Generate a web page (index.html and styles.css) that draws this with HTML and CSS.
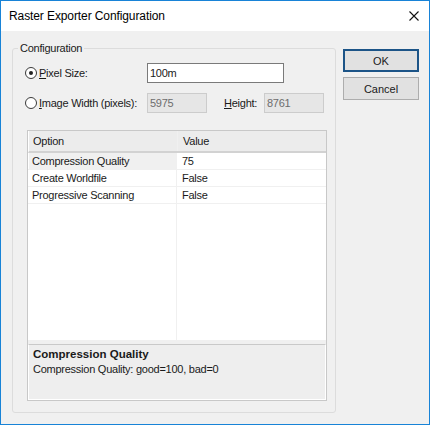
FILE: index.html
```html
<!DOCTYPE html>
<html lang="en">
<head>
  <meta charset="UTF-8">
  <title>Raster Exporter Configuration</title>
  <link rel="stylesheet" href="styles.css">
</head>
<body>
  <div class="window">
    <div class="titlebar">
      <span class="title">Raster Exporter Configuration</span>
      <svg class="close" width="10" height="10" viewBox="0 0 10 10">
        <path d="M0.5 0.5 L9.5 9.5 M9.5 0.5 L0.5 9.5" stroke="#111" stroke-width="1.1" fill="none"/>
      </svg>
    </div>

    <div class="client">
      <fieldset class="group">
        <legend>Configuration</legend>

        <div class="field-row first">
          <span class="radio checked"></span>
          <span class="label"><u>P</u>ixel Size:</span>
          <div class="textbox wide">100m</div>
        </div>

        <div class="field-row">
          <span class="radio"></span>
          <span class="label"><u>I</u>mage Width (pixels):</span>
          <div class="textbox disabled">5975</div>
          <span class="label short"><u>H</u>eight:</span>
          <div class="textbox disabled">8761</div>
        </div>

        <div class="grid">
          <div class="grid-head">
            <div class="cell name">Option</div>
            <div class="cell value">Value</div>
          </div>
          <div class="grid-row selected">
            <div class="cell name">Compression Quality</div>
            <div class="cell value">75</div>
          </div>
          <div class="grid-row">
            <div class="cell name">Create Worldfile</div>
            <div class="cell value">False</div>
          </div>
          <div class="grid-row">
            <div class="cell name">Progressive Scanning</div>
            <div class="cell value">False</div>
          </div>
          <div class="grid-empty">
            <div class="cell name"></div>
            <div class="cell value"></div>
          </div>
          <div class="grid-footer">
            <div class="grid-desc">
              <div class="desc-title">Compression Quality</div>
              <div class="desc-text">Compression Quality: good=100, bad=0</div>
            </div>
          </div>
        </div>
      </fieldset>

      <div class="buttons">
        <button class="btn default">OK</button>
        <button class="btn">Cancel</button>
      </div>
    </div>
  </div>
</body>
</html>
```

FILE: styles.css
```css
* {
  box-sizing: border-box;
  margin: 0;
  padding: 0;
}

body {
  font-family: 'Liberation Sans', Arial, sans-serif;
  font-size: 11px;
  letter-spacing: -0.25px;
  color: #1a1a1a;
  background: #f0f0f0;
}

.window {
  width: 430px;
  height: 425px;
  border: 1px solid #1883d7;
  background: #f0f0f0;
  display: flex;
  flex-direction: column;
}

.titlebar {
  height: 30px;
  background: #fff;
  display: flex;
  align-items: center;
  justify-content: space-between;
  padding: 0 10px 0 8px;
}

.title {
  font-size: 12px;
  letter-spacing: -0.1px;
  color: #000;
}

.client {
  flex: 1;
  display: flex;
  gap: 7px;
  padding: 11px 10px 11px 11px;
}

.group {
  width: 324px;
  border: 1px solid #dcdcdc;
  border-radius: 3px;
  padding: 8px 7px 0 12px;
}

.group legend {
  line-height: 13px;
  padding: 0 2px;
  margin-left: -7px;
  color: #1a1a1a;
}

.field-row {
  display: flex;
  align-items: center;
  height: 20px;
}

.field-row.first {
  margin-bottom: 10px;
}

.radio {
  width: 12px;
  height: 12px;
  border: 1px solid #3a3a3a;
  border-radius: 50%;
  background: #fff;
  margin-right: 2px;
  display: flex;
  align-items: center;
  justify-content: center;
}

.radio.checked::after {
  content: '';
  width: 4px;
  height: 4px;
  border-radius: 50%;
  background: #222;
}

.label {
  width: 108px;
  white-space: nowrap;
}

.label.short {
  width: 40px;
  margin-left: 17px;
}

.textbox {
  width: 60px;
  height: 20px;
  line-height: 18px;
  padding-left: 2px;
  border: 1px solid #7a7a7a;
  background: #fff;
}

.textbox.wide {
  width: 137px;
}

.textbox.disabled {
  border-color: #cccccc;
  background: #e6e6e6;
  color: #6d6d6d;
}

.grid {
  margin: 17px 0 0 2px;
  width: 300px;
  height: 271px;
  border: 1px solid #c8c8c8;
  background: #fff;
  display: flex;
  flex-direction: column;
}

.grid-head,
.grid-row,
.grid-empty {
  display: grid;
  grid-template-columns: 149px 1fr;
}

.grid-head {
  height: 22px;
  background: #ececec;
  border-left: 1px solid #fff;
  border-bottom: 2px solid #d2d2d2;
}

.grid-head .cell {
  line-height: 20px;
}

.grid-head .name {
  border-right: 3px solid #d2d2d2;
  padding-left: 5px;
}

.grid-head .value {
  padding-left: 4px;
}

.grid-row {
  height: 17px;
  border-bottom: 1px solid #f0f0f0;
}

.grid-row .cell {
  line-height: 16px;
}

.cell.name {
  padding-left: 4px;
  border-right: 1px solid #f0f0f0;
}

.cell.value {
  padding-left: 5px;
}

.grid-row.selected .name {
  background: #f0f0f0;
  margin-left: 1px;
  padding-left: 3px;
}

.grid-empty {
  flex: 1;
}

.grid-footer {
  background: #f0f0f0;
  padding-top: 4px;
}

.grid-desc {
  height: 56px;
  background: #eeeeee;
  border-top: 1px solid #c9c9c9;
  border-left: 1px solid #fff;
  border-right: 1px solid #fff;
  border-bottom: 1px solid #fff;
  padding: 3px 4px 0;
  line-height: 13px;
}

.desc-title {
  font-weight: bold;
  font-size: 11.5px;
  letter-spacing: 0;
  margin-bottom: 2px;
}

.buttons {
  width: 76px;
  display: flex;
  flex-direction: column;
  gap: 5px;
  padding-top: 7px;
}

.btn {
  height: 23px;
  font-family: inherit;
  font-size: 11px;
  color: #1a1a1a;
  background: #e1e1e1;
  border: 1px solid #adadad;
}

.btn.default {
  border: 2px solid #1c5487;
}
```
